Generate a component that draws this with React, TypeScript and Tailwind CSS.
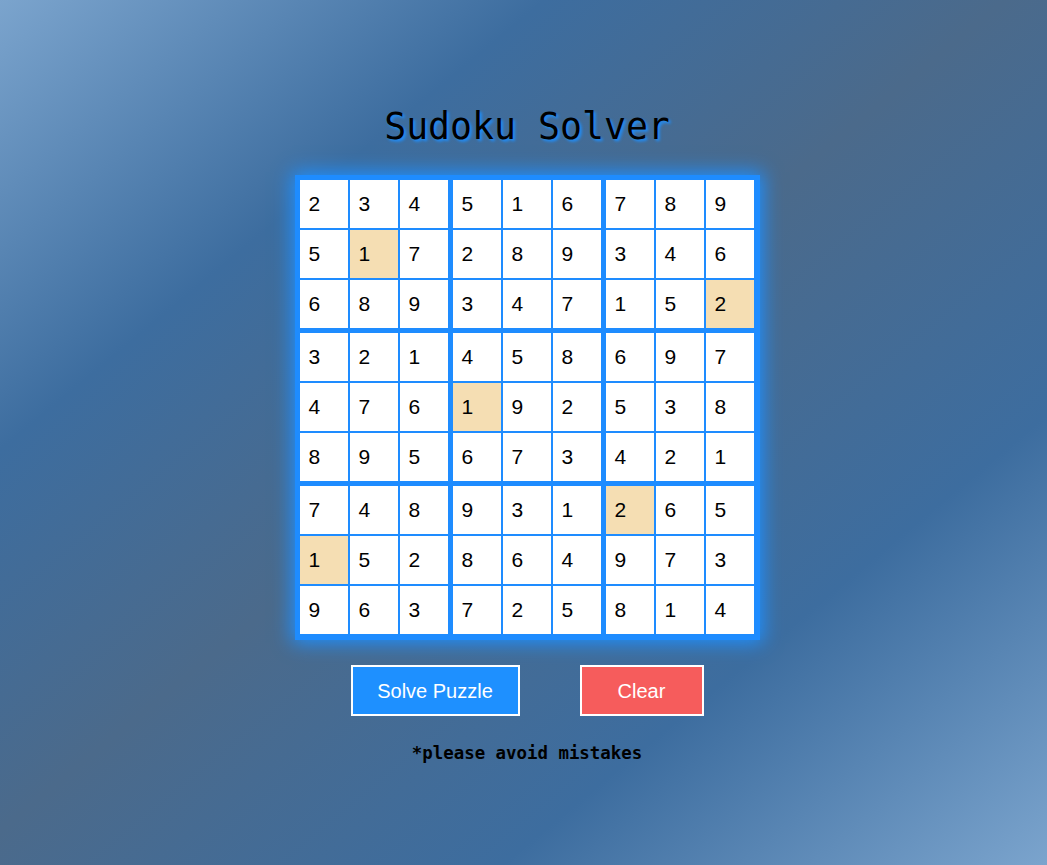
import React from 'react'

const board = [
  [2, 3, 4, 5, 1, 6, 7, 8, 9],
  [5, 1, 7, 2, 8, 9, 3, 4, 6],
  [6, 8, 9, 3, 4, 7, 1, 5, 2],
  [3, 2, 1, 4, 5, 8, 6, 9, 7],
  [4, 7, 6, 1, 9, 2, 5, 3, 8],
  [8, 9, 5, 6, 7, 3, 4, 2, 1],
  [7, 4, 8, 9, 3, 1, 2, 6, 5],
  [1, 5, 2, 8, 6, 4, 9, 7, 3],
  [9, 6, 3, 7, 2, 5, 8, 1, 4],
]

// cells the user typed in
const given = ['1-1', '2-8', '4-3', '6-6', '7-0']

const Cell = ({ r, c }: { r: number; c: number }) => {
  const marked = given.includes(`${r}-${c}`)
  return (
    <div
      className={`h-[48px] w-[48px] flex items-center pl-[9px] text-[21px] text-black font-['Liberation_Sans',Arial,sans-serif] ${
        marked ? 'bg-[#f5deb3]' : 'bg-white'
      }`}
    >
      {board[r][c]}
    </div>
  )
}

const Box = ({ br, bc }: { br: number; bc: number }) => (
  <div className="grid grid-cols-3 gap-[2px]">
    {[0, 1, 2].map((i) =>
      [0, 1, 2].map((j) => <Cell key={`${i}-${j}`} r={br * 3 + i} c={bc * 3 + j} />)
    )}
  </div>
)

const App = () => {
  return (
    <div className="min-h-screen w-full bg-[linear-gradient(to_bottom_right,#7ba4cd_0%,#3d6d9f_26%,#4b6a8b_48%,#3d6d9f_74%,#7ba4cd_100%)] flex flex-col items-center pl-[7px]">
      <h1 className="mt-[105px] text-[36.5px] leading-[44px] text-black font-['DejaVu_Sans_Mono',monospace] [text-shadow:2px_2px_3px_#1e90ff]">
        Sudoku Solver
      </h1>

      <div className="mt-[26px] bg-[#1e8cff] pt-[5px] pl-[5px] pr-[6px] pb-[6px] shadow-[0_0_18px_3px_#1e90ff]">
        <div className="grid grid-cols-3 gap-[5px]">
          {[0, 1, 2].map((br) => [0, 1, 2].map((bc) => <Box key={`${br}-${bc}`} br={br} bc={bc} />))}
        </div>
      </div>

      <div className="mt-[25px] flex gap-[60px] font-['Liberation_Sans',Arial,sans-serif]">
        <button className="w-[169px] h-[51px] bg-[#1e90ff] border-2 border-white text-white text-[20px]">
          Solve Puzzle
        </button>
        <button className="w-[124px] h-[51px] bg-[#f65c5c] border-2 border-white text-white text-[20px]">
          Clear
        </button>
      </div>

      <p className="mt-[24px] text-[17.4px] font-bold text-black font-['DejaVu_Sans_Mono',monospace]">
        *please avoid mistakes
      </p>
    </div>
  )
}

export default App
